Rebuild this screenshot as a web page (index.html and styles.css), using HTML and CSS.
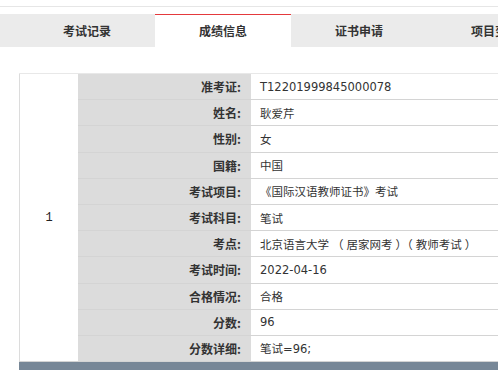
FILE: index.html
```html
<html lang="zh-CN">

<head>
  <meta charset="UTF-8">
  <meta name="viewport" content="width=device-width, initial-scale=1.0">
  <link rel="stylesheet" href="styles.css">
</head>

<body>
  <div class="topline"></div>
  <div class="tabs">
    <div class="tab">考试记录</div>
    <div class="tab active">成绩信息</div>
    <div class="tab">证书申请</div>
    <div class="tab">项目变更</div>
  </div>

  <table class="score">
    <tr>
      <td class="num" rowspan="11">1</td>
      <th>准考证:</th>
      <td>T12201999845000078</td>
    </tr>
    <tr>
      <th>姓名:</th>
      <td>耿爱芹</td>
    </tr>
    <tr>
      <th>性别:</th>
      <td>女</td>
    </tr>
    <tr>
      <th>国籍:</th>
      <td>中国</td>
    </tr>
    <tr>
      <th>考试项目:</th>
      <td>《国际汉语教师证书》考试</td>
    </tr>
    <tr>
      <th>考试科目:</th>
      <td>笔试</td>
    </tr>
    <tr>
      <th>考点:</th>
      <td>北京语言大学<span class="fw">（</span>居家网考<span class="fw">）（</span>教师考试<span class="fw">）</span></td>
    </tr>
    <tr>
      <th>考试时间:</th>
      <td>2022-04-16</td>
    </tr>
    <tr>
      <th>合格情况:</th>
      <td>合格</td>
    </tr>
    <tr>
      <th>分数:</th>
      <td>96</td>
    </tr>
    <tr>
      <th>分数详细:</th>
      <td>笔试=96;</td>
    </tr>
  </table>
  <div class="footbar"></div>
</body>

</html>
```

FILE: styles.css
```css
body {
  margin: 0;
  padding: 0;
  width: 498px;
  height: 370px;
  overflow: hidden;
  font-family: "DejaVu Sans", "Noto Sans CJK SC", sans-serif;
  color: #333;
  background: #fff;
}

.topline {
  height: 6px;
  border-bottom: 1px solid #e6e6e6;
  margin-bottom: 7px;
}

.tabs {
  display: flex;
  height: 33px;
  padding-left: 19px;
  background: #ebebeb;
  overflow: hidden;
}

.tab {
  flex: 0 0 136px;
  line-height: 33px;
  text-align: center;
  font-size: 12px;
  font-weight: bold;
  font-family: "Noto Sans CJK SC", sans-serif;
}

.tab.active {
  background: #fff;
  border-top: 1px solid #e4393c;
  line-height: 32px;
}

.score {
  margin: 26px 0 0 19px;
  width: 560px;
  border-collapse: collapse;
  font-size: 11.5px;
}

.score th,
.score td {
  height: 26.2px;
  padding: 0;
  border: 1px solid #d4d4d4;
  border-left: none;
  border-right: none;
}

.score th {
  width: 163px;
  padding-right: 10px;
  text-align: right;
  font-weight: bold;
  font-size: 12px;
  background: #dcdcdc;
  font-family: "Noto Sans CJK SC", sans-serif;
}

.score td {
  padding-left: 9px;
  background: #fff;
}

/* 全角括号留白 */
.fw {
  margin: 0 3px;
}

.score tr:first-child th,
.score tr:first-child td {
  border-top: 1px solid #e8e8e8;
}

.score td.num {
  width: 58px;
  padding: 0;
  text-align: center;
  border-left: 1px solid #dcdcdc;
  font-family: "Liberation Mono", monospace;
  font-size: 12px;
  color: #222;
}

.footbar {
  margin-left: 19px;
  height: 8px;
  background: #778797;
}
```
